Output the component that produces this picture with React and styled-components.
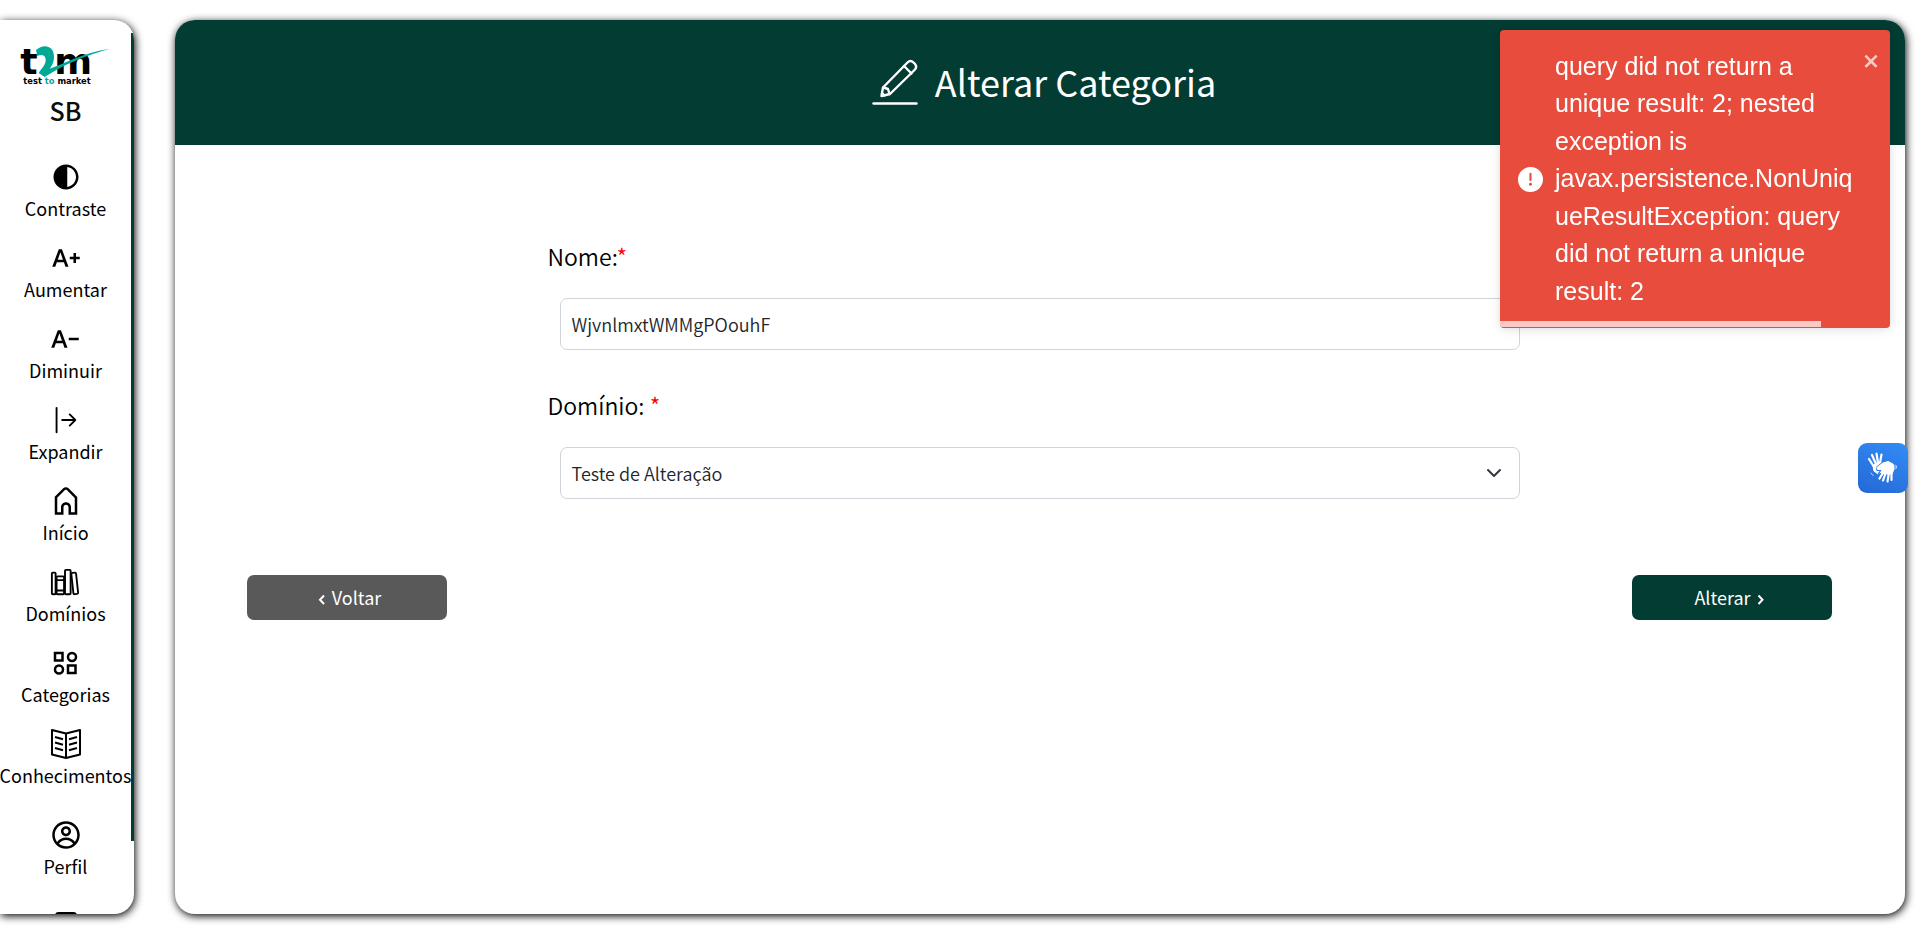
import React from "react";
import styled, { createGlobalStyle } from "styled-components";
import { MdContrast, MdTextIncrease, MdTextDecrease } from "react-icons/md";
import { BsArrowBarRight } from "react-icons/bs";
import { CgHome, CgProfile } from "react-icons/cg";
import { IoLibraryOutline } from "react-icons/io5";

const GREEN = "#023c32";

const GlobalStyle = createGlobalStyle`
  *, *::before, *::after { box-sizing: border-box; }
  body {
    margin: 0;
    background: #fff;
    color: #0d0d0d;
    font-family: "Noto Sans CJK JP", "Noto Sans", sans-serif;
    font-size: 18px;
  }
`;

const Page = styled.div`
  display: flex;
  gap: 41px;
  min-height: 100vh;
  padding: 20px 15px 20px 0;
`;

const Sidebar = styled.aside`
  position: relative;
  flex: none;
  width: 134px;
  height: calc(100vh - 40px);
  padding: 24px 3px 0 0;
  overflow: hidden;
  border-radius: 0 20px 20px 0;
  display: flex;
  flex-direction: column;
  align-items: center;
`;

const SidebarShell = styled.div`
  flex: none;
  align-self: flex-start;
  border-radius: 0 20px 20px 0;
  box-shadow: 1px 2px 8px #000;
`;

const ScrollThumb = styled.span`
  position: absolute;
  top: 13px;
  right: 0;
  width: 3px;
  height: 808px;
  background: ${GREEN};
`;

const Logo = styled.svg`
  flex: none;
  width: 92px;
  height: 44px;
  overflow: visible;
`;

const Initials = styled.span`
  flex: none;
  font-size: 25px;
  font-weight: 500;
  line-height: 44px;
  margin-bottom: 30px;
`;

const Menu = styled.nav`
  flex: none;
  display: flex;
  flex-direction: column;
  align-items: center;
`;

const MenuItem = styled.a`
  display: flex;
  flex-direction: column;
  align-items: center;
  height: ${(p) => (p.$spaced ? 91 : 81)}px;
  color: #000;
  font-size: 18px;
  font-weight: 400;
  line-height: 32px;
  text-decoration: none;
  svg { flex: none; width: 30px; height: 30px; }
`;

const Main = styled.main`
  flex: 1;
  min-width: 0;
  min-height: calc(100vh - 40px);
  border-radius: 20px;
  overflow: hidden;
  background: #fff;
  box-shadow: 1px 2px 8px #000;
`;

const Header = styled.header`
  display: flex;
  align-items: center;
  justify-content: center;
  gap: 17px;
  height: 125px;
  padding: 0 0 2px 8px;
  background: ${GREEN};
  color: #fff;
  svg { width: 46px; height: 46px; }
`;

const Title = styled.h1`
  margin: 0;
  padding-bottom: 2px;
  font-size: 36px;
  font-weight: 400;
  line-height: 56px;
`;

const Form = styled.form`
  padding: 91px 73px 0 72px;
`;

const Fields = styled.div`
  width: 986px;
  max-width: 100%;
  margin: 0 auto;
  display: flex;
  flex-direction: column;
  gap: 35px;
`;

const Field = styled.div`
  display: flex;
  flex-direction: column;
  gap: 22px;
`;

const Label = styled.label`
  padding-left: 1px;
  font-size: 23px;
  font-weight: 350;
  line-height: 40px;
  color: #000;
`;

const Required = styled.span`
  color: #f00;
`;

const controlStyle = `
  width: 100%;
  height: 52px;
  padding: 0 11px;
  border: 1px solid #ced4da;
  border-radius: 7px;
  background: #fff;
  color: #212529;
  font: inherit;
  font-size: 18px;
  font-weight: 350;
  appearance: none;
`;

const Input = styled.input`${controlStyle}`;
const Select = styled.select`${controlStyle}`;

const ControlWrap = styled.div`
  position: relative;
  margin: 0 13px;
  svg {
    position: absolute;
    right: 18px;
    top: 18px;
    width: 16px;
    height: 16px;
    pointer-events: none;
  }
`;

const Actions = styled.div`
  display: flex;
  justify-content: space-between;
  margin-top: 76px;
`;

const Button = styled.button`
  display: flex;
  align-items: center;
  justify-content: center;
  gap: 1px;
  width: 200px;
  height: 45px;
  padding: 0 0 2px;
  border: 0;
  border-radius: 7px;
  background: ${(p) => (p.$primary ? GREEN : "#595959")};
  color: #fff;
  font: inherit;
  font-size: 18px;
  svg { width: 18px; height: 18px; }
`;

const Toast = styled.div`
  position: fixed;
  top: 30px;
  right: 30px;
  width: 390px;
  height: 298px;
  display: flex;
  align-items: center;
  gap: 12px;
  padding: 0 36px 0 18px;
  border-radius: 4px;
  overflow: hidden;
  background: #e74c3c;
  color: #fff;
  font-family: "Liberation Sans", Arial, sans-serif;
  font-size: 25px;
  line-height: 1.5;
  box-shadow: 0 1px 10px rgba(0, 0, 0, 0.1), 0 2px 15px rgba(0, 0, 0, 0.05);
  > svg { flex: none; width: 25px; height: 25px; }
`;

const ToastText = styled.div`
  flex: 1;
  min-width: 0;
  word-break: break-word;
`;

const CloseButton = styled.button`
  position: absolute;
  top: 21px;
  right: 9px;
  width: 18px;
  height: 20px;
  padding: 0;
  border: 0;
  background: transparent;
  color: #fff;
  opacity: 0.7;
  svg { display: block; width: 18px; height: 20px; }
`;

const Progress = styled.div`
  position: absolute;
  left: 0;
  bottom: 1px;
  width: 321px;
  height: 6px;
  background: rgba(255, 255, 255, 0.7);
`;

const SignButton = styled.button`
  position: fixed;
  top: 443px;
  right: 12px;
  width: 50px;
  height: 50px;
  padding: 0;
  border: 0;
  border-radius: 9px;
  background: linear-gradient(205deg, #338cf6, #2468d6);
  svg { display: block; width: 50px; height: 50px; }
`;

const LogoMark = () => (
  <Logo viewBox="60 132 276 132" role="img" aria-label="t2m test to market">
    <g fontFamily="DejaVu Sans" fontWeight="700">
      <text x="61" y="223" fontSize="109" fill="#000">t</text>
      <text x="163" y="223" fontSize="109" fill="#000">m</text>
      <text x="70" y="251" fontSize="25" fill="#000">
        test <tspan fill="#00a896">to</tspan> market
      </text>
    </g>
    <path
      d="M108 150 C130 130 162 136 162 170 C162 190 153 200 149 206 C200 188 250 158 330 146 C262 165 192 192 134 231 L116 219 C125 205 138 195 137 178 C136 165 125 162 112 168 Z"
      fill="#00a896"
    />
  </Logo>
);

const CategoryIcon = () => (
  <svg viewBox="0 0 30 30" fill="none" stroke="currentColor" strokeWidth="2.500">
    <rect x="5" y="5" width="7.500" height="7.500" />
    <circle cx="22" cy="9" r="4" />
    <circle cx="9" cy="21.500" r="4" />
    <rect x="18" y="17.500" width="7.500" height="7.500" />
  </svg>
);

const OpenBookIcon = () => (
  <svg viewBox="0 0 30 30" fill="none" stroke="currentColor" strokeWidth="2" strokeLinejoin="round">
    <path d="M15 4.500 L1 1 V25.500 L15 29 L29 25.500 V1 Z M15 4.500 V29" />
    <path d="M4 8 L12 10.200 M4 13.500 L12 15.700 M4 19 L12 21.200 M26 8 L18 10.200 M26 13.500 L18 15.700 M26 19 L18 21.200" />
  </svg>
);

const LogoutIcon = () => (
  <svg viewBox="0 0 30 30" fill="none" stroke="currentColor" strokeWidth="3">
    <rect x="5.500" y="2.500" width="19" height="24" rx="2" />
  </svg>
);

const PencilIcon = () => (
  <svg viewBox="0 0 46 46" fill="none" stroke="currentColor" strokeWidth="2.400" strokeLinecap="round" strokeLinejoin="round">
    <path d="M1.500 44.500 H44.500" />
    <path d="M9.500 37 L11 28.500 L35.500 3.500 Q38.500 0.500 41.500 3.500 L43 5 Q45.500 8 42.500 11 L18 35 Z" />
    <path d="M32 7 L39.500 14.500 M11.500 28.500 L16 30 L17.500 35" />
    <path d="M10 34 L12.500 36.500" />
  </svg>
);

const ChevronLeft = () => (
  <svg viewBox="0 0 18 18" fill="none" stroke="currentColor" strokeWidth="2" aria-hidden="true">
    <path d="M11 7.500 L7 11.700 L11 16" />
  </svg>
);

const ChevronRight = () => (
  <svg viewBox="0 0 18 18" fill="none" stroke="currentColor" strokeWidth="2" aria-hidden="true">
    <path d="M6.500 7.500 L10.500 11.700 L6.500 16" />
  </svg>
);

const LowerHand = () => (
  <>
    <path d="M19 24.500 L25 20 L30 18.500 L35 21 L36 26 L34 31 L26 31 L22.500 29.500 L25 26 L20 26 Z" fill="#fff" strokeWidth="1" />
    <path d="M26 28 L21.500 35.500 M28 29 L25 37.500 M31 29 L29.500 38.500 M33.500 28 L33.500 37" strokeWidth="2.200" />
  </>
);

const SignIcon = () => (
  <svg viewBox="0 0 50 50" fill="none" stroke="#fff" strokeLinecap="round" strokeLinejoin="round">
    <path d="M11 16 L16 24 M14 12 L18 21 M18.500 10.500 L20 20 M23.500 11.500 L22 20" strokeWidth="2.200" />
    <path d="M15.500 22 L22 19 L25 20.500 L24 28 L20 31 L16 28 Z" fill="#fff" strokeWidth="1" />
    <path d="M18.500 24.500 L25 19 L30 17.500 M18.500 25 L19 27.500 L23 27.500 L20.500 30.500" stroke="#2b7be8" strokeWidth="1.200" />
    <LowerHand />
    <path d="M37 22 V26 M38.500 23 V25 M13 30 L15 32.500" strokeWidth="0.700" />
  </svg>
);

const menu = [
  ["Contraste", MdContrast],
  ["Aumentar", MdTextIncrease],
  ["Diminuir", MdTextDecrease],
  ["Expandir", BsArrowBarRight],
  ["Início", CgHome],
  ["Domínios", IoLibraryOutline],
  ["Categorias", CategoryIcon],
  ["Conhecimentos", OpenBookIcon, true],
  ["Perfil", CgProfile, true],
];

export default function App() {
  return (
    <>
      <GlobalStyle />
      <Page>
        <SidebarShell>
          <Sidebar>
            <LogoMark />
            <Initials>SB</Initials>
            <Menu>
              {menu.map(([name, Icon, spaced]) => (
                <MenuItem key={name} href="#" $spaced={spaced}>
                  <Icon />
                  {name}
                </MenuItem>
              ))}
              <MenuItem href="#" aria-label="Sair">
                <LogoutIcon />
              </MenuItem>
            </Menu>
            <ScrollThumb />
          </Sidebar>
        </SidebarShell>
        <Main>
          <Header>
            <PencilIcon />
            <Title>Alterar Categoria</Title>
          </Header>
          <Form onSubmit={(e) => e.preventDefault()}>
            <Fields>
              <Field>
                <Label htmlFor="nome">Nome:<Required>*</Required></Label>
                <ControlWrap>
                  <Input id="nome" defaultValue="WjvnlmxtWMMgPOouhF" />
                </ControlWrap>
              </Field>
              <Field>
                <Label htmlFor="dominio">Domínio: <Required>*</Required></Label>
                <ControlWrap>
                  <Select id="dominio">
                    <option>Teste de Alteração</option>
                  </Select>
                  <svg viewBox="0 0 16 16" fill="none" stroke="#343a40" strokeWidth="2" strokeLinecap="round" strokeLinejoin="round">
                    <path d="m2 5 6 6 6-6" />
                  </svg>
                </ControlWrap>
              </Field>
            </Fields>
            <Actions>
              <Button type="button"><ChevronLeft />Voltar</Button>
              <Button type="submit" $primary>Alterar<ChevronRight /></Button>
            </Actions>
          </Form>
        </Main>
      </Page>
      <Toast role="alert">
        <svg viewBox="0 0 24 24" fill="#fff">
          <path d="M11.983 0a12.206 12.206 0 00-8.510 3.653A11.800 11.800 0 000 12.207 11.779 11.779 0 0011.800 24h.214A12.111 12.111 0 0024 11.791 11.766 11.766 0 0011.983 0zM10.500 16.542a1.476 1.476 0 011.449-1.530h.027a1.527 1.527 0 011.523 1.470 1.475 1.475 0 01-1.449 1.530h-.027a1.529 1.529 0 01-1.523-1.470zM11 12.500v-6a1 1 0 012 0v6a1 1 0 11-2 0z" />
        </svg>
        <ToastText>
          query did not return a unique result: 2; nested exception is
          javax.persistence.NonUniqueResultException: query did not return a unique result: 2
        </ToastText>
        <CloseButton aria-label="close">
          <svg viewBox="0 0 14 16" fill="#fff">
            <path fillRule="evenodd" d="M7.710 8.230l3.750 3.750-1.480 1.480-3.750-3.750-3.750 3.750L1 11.980l3.750-3.750L1 4.480 2.480 3l3.750 3.750L9.980 3l1.480 1.480-3.750 3.750z" />
          </svg>
        </CloseButton>
        <Progress />
      </Toast>
      <SignButton aria-label="Libras">
        <SignIcon />
      </SignButton>
    </>
  );
}
